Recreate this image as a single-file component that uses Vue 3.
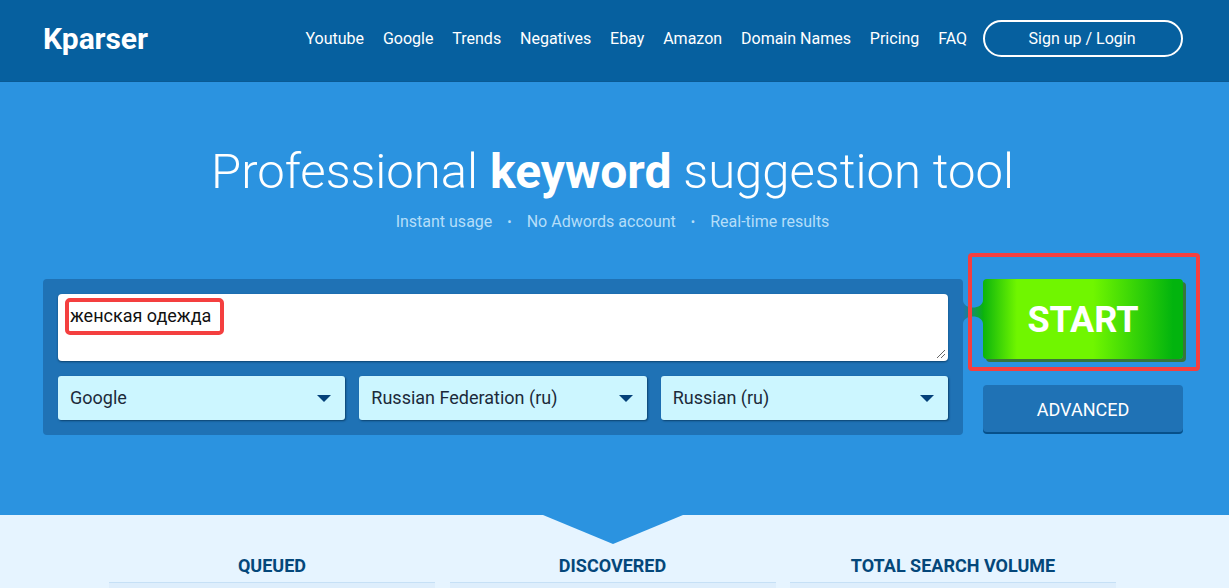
<script setup>
const links = ['Youtube', 'Google', 'Trends', 'Negatives', 'Ebay', 'Amazon', 'Domain Names', 'Pricing', 'FAQ']
const selects = ['Google', 'Russian Federation (ru)', 'Russian (ru)']
const perks = ['Instant usage', 'No Adwords account', 'Real-time results']
const stats = ['QUEUED', 'DISCOVERED', 'TOTAL SEARCH VOLUME']
</script>

<template>
  <div class="page">
    <header class="top">
      <div class="logo">Kparser</div>
      <nav class="nav">
        <a v-for="l in links" :key="l">{{ l }}</a>
        <button class="login">Sign up / Login</button>
      </nav>
    </header>
    <section class="hero">
      <h1>Professional <b>keyword</b> suggestion tool</h1>
      <div class="perks">
        <template v-for="(p, i) in perks" :key="p">
          <span v-if="i" class="dot">•</span>
          <span>{{ p }}</span>
        </template>
      </div>
      <div class="work">
        <div class="panel">
          <div class="area">
            <span class="query">женская одежда</span>
            <span class="mark"></span>
            <svg class="grip" width="10" height="10" viewBox="0 0 10 10">
              <path d="M1 9 9 1M5 9 9 5" stroke="#666" stroke-width="1" fill="none" />
            </svg>
          </div>
          <div class="selects">
            <div v-for="s in selects" :key="s" class="sel">
              <span>{{ s }}</span>
              <i class="caret"></i>
            </div>
          </div>
        </div>
        <div class="actions">
          <button class="start">
            <svg class="tab" width="20" height="24" viewBox="0 0 20 24">
              <defs>
                <linearGradient id="tabfill" x1="0" x2="1" y1="0" y2="0">
                  <stop offset="0" stop-color="#1f72b5" />
                  <stop offset="1" stop-color="#0bb111" />
                </linearGradient>
              </defs>
              <path d="M0 0C0 5 5 7.5 10 7.5 15 7.5 20 5 20 0V24C20 19 15 16.5 10 16.5 5 16.5 0 19 0 24Z" fill="url(#tabfill)" />
            </svg>
            START
          </button>
          <button class="adv">ADVANCED</button>
          <span class="startmark"></span>
        </div>
      </div>
      <div class="notch"></div>
    </section>
    <section class="stats">
      <div v-for="s in stats" :key="s" class="stat">
        <h3>{{ s }}</h3>
        <div class="box"></div>
      </div>
    </section>
  </div>
</template>

<style>
html, body { margin: 0; overflow: hidden; }
</style>

<style scoped>
.page { width: 1229px; height: 588px; overflow: hidden; font-family: Roboto, sans-serif; }
.top {
  height: 82px; background: #06609f; display: flex; align-items: center;
  justify-content: space-between; padding: 0 46px 5px 43px; box-sizing: border-box;
  box-shadow: inset 0 -1px 0 #0a5a94;
}
.logo { color: #fff; font-size: 30px; font-weight: 700; letter-spacing: -0.1px; }
.nav { display: flex; align-items: center; gap: 18.9px; }
.nav a { color: #fff; font-size: 16px; }
.login {
  width: 200px; height: 37px; margin-left: -3px; padding: 0 2px 0 0; border: 2px solid #fff; border-radius: 19px;
  background: transparent; color: #fff; font: 400 16px Roboto, sans-serif;
}
.hero { position: relative; height: 433px; background: #2b93e0; text-align: center; }
h1 { margin: 0; padding: 61px 4px 0 0; font-size: 49px; font-weight: 300; line-height: 58px; color: #fff; }
h1 b { font-weight: 700; font-size: 48px; }
.perks {
  display: flex; justify-content: center; gap: 15px; margin-top: 10px; padding-right: 4px;
  font-size: 16px; line-height: 22px; color: #b5def9;
}
.dot { font-size: 13px; }
.work { display: flex; gap: 20px; margin: 46px 46px 0 43px; text-align: left; }
.panel {
  width: 920px; height: 156px; box-sizing: border-box; padding: 15px; background: #1f72b5;
  border-radius: 4px; display: flex; flex-direction: column; gap: 15px;
}
.area {
  position: relative; height: 67px; padding: 11px 12px; box-sizing: border-box; background: #fff;
  border-radius: 4px; box-shadow: 0 1px 2px rgba(3, 45, 80, .7);
  font-size: 18px; line-height: 22px; color: #111;
}
.mark {
  position: absolute; left: 7px; top: 4px; width: 159px; height: 37px; box-sizing: border-box;
  border: 4px solid #f43f3f; border-radius: 5px;
}
.grip { position: absolute; right: 2px; bottom: 2px; }
.selects { display: flex; gap: 14px; }
.sel {
  flex: 1; height: 44px; display: flex; align-items: center; justify-content: space-between;
  padding: 0 14px 2px 12px; box-sizing: border-box; background: #ccf6ff; border-radius: 3px;
  box-shadow: 1px 1px 2px rgba(3, 45, 80, .7); font-size: 18px; color: #1c2a3a;
}
.caret { border: 7px solid transparent; border-top: 7px solid #04417a; border-bottom: 0; margin-top: 2px; }
.actions { position: relative; width: 200px; display: flex; flex-direction: column; gap: 26px; }
.start {
  position: relative; height: 80px; border: 0; border-radius: 4px; color: #fff;
  background: linear-gradient(90deg, #0cb40c 0%, #70f600 17%, #70f600 55%, #02b40e 95%);
  box-shadow: 3px 3px 0 #37763a; font: 700 36px Roboto, sans-serif; padding: 2px 0 0;
}
.tab { position: absolute; left: -20px; top: 21px; }
.adv {
  height: 47px; border: 0; border-radius: 4px; background: #1f72b5; color: #fff; padding: 1px 0 0;
  box-shadow: 0 2px 0 #06508a; font: 400 18px Roboto, sans-serif;
}
.startmark {
  position: absolute; left: -15px; top: -26px; width: 232px; height: 118px; box-sizing: border-box;
  border: 4px solid #f43f3f; border-radius: 4px;
}
.notch {
  position: absolute; left: 543px; bottom: -29px; width: 140px; height: 29px; background: #2b93e0;
  clip-path: polygon(0 0, 100% 0, 50% 100%); z-index: 1;
}
.stats {
  height: 73px; background: #e6f4ff; display: flex; gap: 14.5px; padding: 0 113px 0 109px; box-sizing: border-box;
}
.stat { flex: 1; }
h3 {
  margin: 0; padding-top: 40px; height: 67px; box-sizing: border-box; text-align: center;
  font-size: 18px; line-height: 21px; font-weight: 700; color: #04477a;
}
.box { height: 10px; background: #deeefc; border-top: 1px solid #c6e0f6; }
</style>
